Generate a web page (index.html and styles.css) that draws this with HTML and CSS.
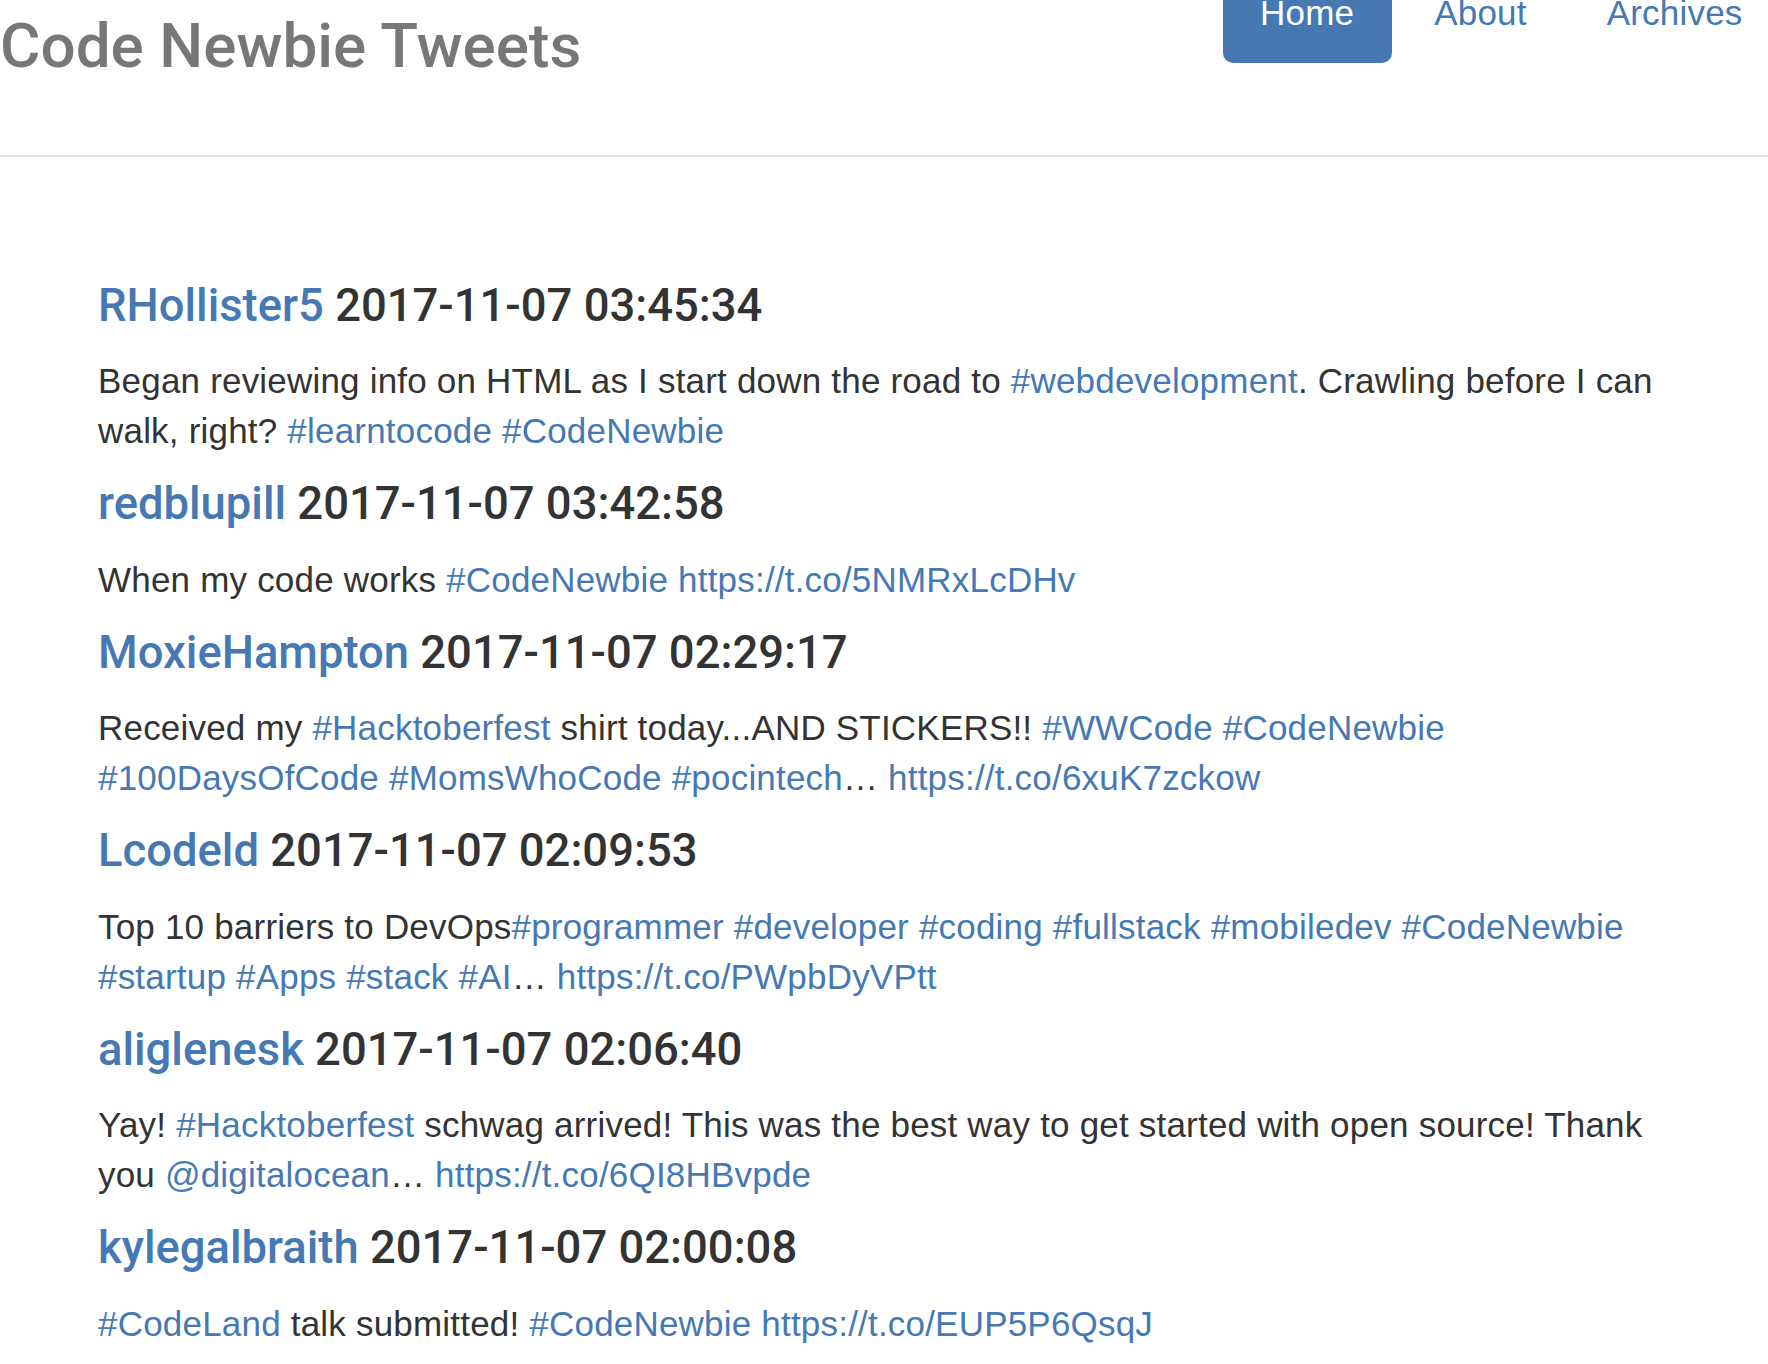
FILE: index.html
```html
<!DOCTYPE html>
<html lang="en">
<head>
<meta charset="utf-8">
<title>Code Newbie Tweets</title>
<link rel="stylesheet" href="styles.css">
</head>
<body>
<header class="header">
  <h3 class="brand">Code Newbie Tweets</h3>
  <nav class="nav">
    <ul class="pills">
      <li class="pill active"><a href="#">Home</a></li>
      <li class="pill"><a href="#">About</a></li>
      <li class="pill"><a href="#">Archives</a></li>
    </ul>
  </nav>
</header>
<main class="tweets">
  <article class="tweet">
    <h4 class="tweet-head"><a href="#">RHollister5</a> 2017-11-07 03:45:34</h4>
    <p class="tweet-text">Began reviewing info on HTML as I start down the road to <a href="#">#webdevelopment</a>. Crawling before I can walk, right? <a href="#">#learntocode</a> <a href="#">#CodeNewbie</a></p>
  </article>
  <article class="tweet">
    <h4 class="tweet-head"><a href="#">redblupill</a> 2017-11-07 03:42:58</h4>
    <p class="tweet-text">When my code works <a href="#">#CodeNewbie</a> <a href="#">https://t.co/5NMRxLcDHv</a></p>
  </article>
  <article class="tweet">
    <h4 class="tweet-head"><a href="#">MoxieHampton</a> 2017-11-07 02:29:17</h4>
    <p class="tweet-text">Received my <a href="#">#Hacktoberfest</a> shirt today...AND STICKERS!! <a href="#">#WWCode</a> <a href="#">#CodeNewbie</a> <a href="#">#100DaysOfCode</a> <a href="#">#MomsWhoCode</a> <a href="#">#pocintech</a>… <a href="#">https://t.co/6xuK7zckow</a></p>
  </article>
  <article class="tweet">
    <h4 class="tweet-head"><a href="#">Lcodeld</a> 2017-11-07 02:09:53</h4>
    <p class="tweet-text">Top 10 barriers to DevOps<a href="#">#programmer</a> <a href="#">#developer</a> <a href="#">#coding</a> <a href="#">#fullstack</a> <a href="#">#mobiledev</a> <a href="#">#CodeNewbie</a> <a href="#">#startup</a> <a href="#">#Apps</a> <a href="#">#stack</a> <a href="#">#AI</a>… <a href="#">https://t.co/PWpbDyVPtt</a></p>
  </article>
  <article class="tweet">
    <h4 class="tweet-head"><a href="#">aliglenesk</a> 2017-11-07 02:06:40</h4>
    <p class="tweet-text">Yay! <a href="#">#Hacktoberfest</a> schwag arrived! This was the best way to get started with open source! Thank you <a href="#">@digitalocean</a>… <a href="#">https://t.co/6QI8HBvpde</a></p>
  </article>
  <article class="tweet">
    <h4 class="tweet-head"><a href="#">kylegalbraith</a> 2017-11-07 02:00:08</h4>
    <p class="tweet-text"><a href="#">#CodeLand</a> talk submitted! <a href="#">#CodeNewbie</a> <a href="#">https://t.co/EUP5P6QsqJ</a></p>
  </article>
</main>
</body>
</html>
```

FILE: styles.css
```css
html, body {
  margin: 0;
  padding: 0;
  background: #ffffff;
  overflow-x: hidden;
}

body {
  font-family: "Liberation Sans", Arial, Helvetica, sans-serif;
  font-size: 35px;
  line-height: 50px;
  letter-spacing: 0.2px;
  color: #333333;
}

a {
  color: #4679b3;
  text-decoration: none;
}

.header {
  display: flex;
  justify-content: space-between;
  align-items: flex-start;
  padding-bottom: 50px;
  border-bottom: 2px solid #e5e5e5;
}

.brand {
  margin: 12.5px 0 26.5px 0;
  font-family: Roboto, "Liberation Sans", Arial, sans-serif;
  font-size: 62px;
  line-height: 66px;
  font-weight: 500;
  letter-spacing: 0;
  color: #777777;
  white-space: nowrap;
}

.nav {
  margin-right: -12px;
}

.pills {
  display: flex;
  list-style: none;
  margin: -37px 0 0 0;
  padding: 0;
}

.pill {
  margin-left: 5px;
}

.pill a {
  display: block;
  padding: 25px 37.5px;
  line-height: 50px;
  border-radius: 10px;
}

.pill.active a {
  background: #4679b3;
  color: #ffffff;
}

.tweets {
  padding: 100.5px 0 0 98px;
  width: 1572px;
}

.tweet-head {
  margin: 24px 0 26.5px 0;
  font-family: Roboto, "Liberation Sans", Arial, sans-serif;
  font-size: 45.4px;
  line-height: 48px;
  font-weight: 500;
  letter-spacing: 0;
  color: #333333;
}

.tweet-text {
  margin: 0 0 24px 0;
}
```
